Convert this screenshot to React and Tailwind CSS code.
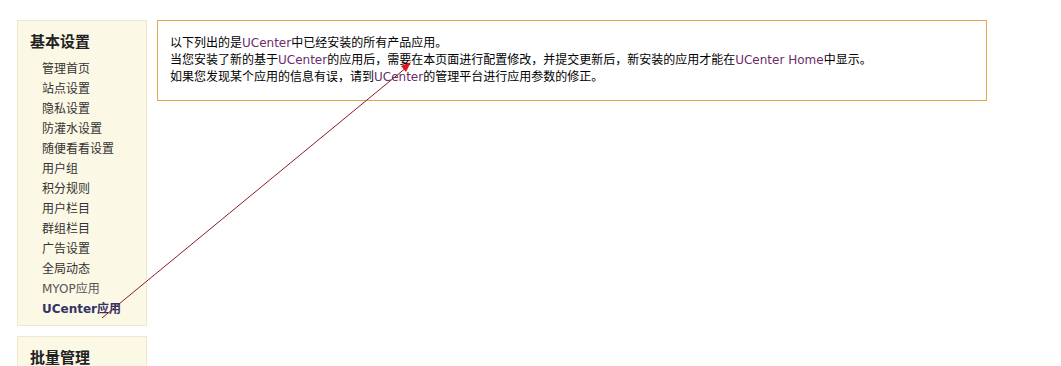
import React from "react";

const items = [
  "管理首页",
  "站点设置",
  "隐私设置",
  "防灌水设置",
  "随便看看设置",
  "用户组",
  "积分规则",
  "用户栏目",
  "群组栏目",
  "广告设置",
  "全局动态",
];

const U = ({ children }) => <span className="text-[#6a2c6a]">{children}</span>;

export default function App() {
  return (
    <div
      className="relative w-[1061px] h-[366px] overflow-hidden bg-white text-[12px] text-black"
      style={{ fontFamily: '"DejaVu Sans", "Noto Sans CJK SC", sans-serif' }}
    >
      <div className="flex items-start gap-[10px] pl-[17px] pt-[20px]">
        <div className="flex flex-col gap-[10px] w-[130px] shrink-0">
          <div className="bg-[#fcf8e6] border border-[#efe8cf] pt-[11px] pb-[6px]">
            <div className="pl-[12px] text-[15px] leading-[20px] font-bold text-[#222]">基本设置</div>
            <ul className="mt-[7px] pl-[24px] leading-[20px] text-[#333]">
              {items.map((t) => (
                <li key={t}>{t}</li>
              ))}
              <li className="text-[#555]">MYOP应用</li>
              <li className="font-bold text-[#333366]">UCenter应用</li>
            </ul>
          </div>
          <div className="bg-[#fcf8e6] border border-[#efe8cf] pt-[11px] h-[60px]">
            <div className="pl-[12px] text-[15px] leading-[20px] font-bold text-[#222]">批量管理</div>
          </div>
        </div>
        <div className="w-[830px] border border-[#e3a64a] pl-[12px] py-[14px] leading-[17px]">
          <p>以下列出的是<U>UCenter</U>中已经安装的所有产品应用。</p>
          <p>
            当您安装了新的基于<U>UCenter</U>的应用后，需要在本页面进行配置修改，并提交更新后，新安装的应用才能在<U>UCenter Home</U>中显示。
          </p>
          <p>如果您发现某个应用的信息有误，请到<U>UCenter</U>的管理平台进行应用参数的修正。</p>
        </div>
      </div>
      <svg className="absolute left-0 top-0 pointer-events-none" width="1061" height="366">
        <line x1="102" y1="318" x2="407" y2="67" stroke="#8b1c24" strokeWidth="1" />
        <polygon points="411,62 401,66 406,72" fill="#e0141e" />
      </svg>
    </div>
  );
}
